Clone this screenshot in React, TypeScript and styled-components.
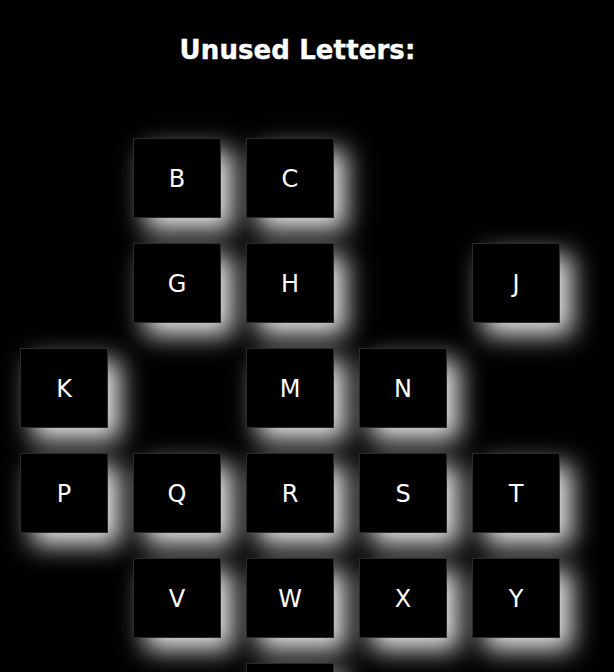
import React from "react";
import styled, { createGlobalStyle } from "styled-components";

const GlobalStyle = createGlobalStyle`
  html, body {
    margin: 0;
    padding: 0;
    background: #000;
  }
  body {
    font-family: "DejaVu Sans", Verdana, sans-serif;
    color: #fff;
  }
`;

const Page = styled.div`
  width: 595px;
  padding-top: 35px;
  padding-bottom: 40px;
`;

const Title = styled.h2`
  margin: 0;
  font-family: "DejaVu Sans", Verdana, sans-serif;
  font-weight: bold;
  font-size: 26px;
  line-height: 30px;
  text-align: center;
  color: #fff;
  letter-spacing: 0.1px;
  -webkit-text-stroke: 0.4px #fff;
`;

const Board = styled.div`
  width: 540px;
  margin: 73px 0 0 20px;
  display: flex;
  flex-wrap: wrap;
  justify-content: center;
  column-gap: 25px;
  row-gap: 25px;
`;

const Tile = styled.div<{ $used: boolean }>`
  box-sizing: border-box;
  width: 88px;
  height: 80px;
  background: #000;
  border: 1px solid #2a2a2a;
  box-shadow: 12px 12px 24px rgba(255, 255, 255, 0.9);
  display: flex;
  align-items: center;
  justify-content: center;
  padding-top: 1px;
  font-family: "DejaVu Sans", Verdana, sans-serif;
  font-size: 24px;
  color: #fff;
  visibility: ${(p) => (p.$used ? "hidden" : "visible")};
`;

const used = new Set(["A", "D", "E", "F", "I", "L", "O", "U"]);
const letters = "ABCDEFGHIJKLMNOPQRSTUVWXYZ".split("");

export default function App() {
  return (
    <>
      <GlobalStyle />
      <Page>
        <Title>Unused Letters:</Title>
        <Board>
          {letters.map((l) => (
            <Tile key={l} $used={used.has(l)}>
              {l}
            </Tile>
          ))}
        </Board>
      </Page>
    </>
  );
}
